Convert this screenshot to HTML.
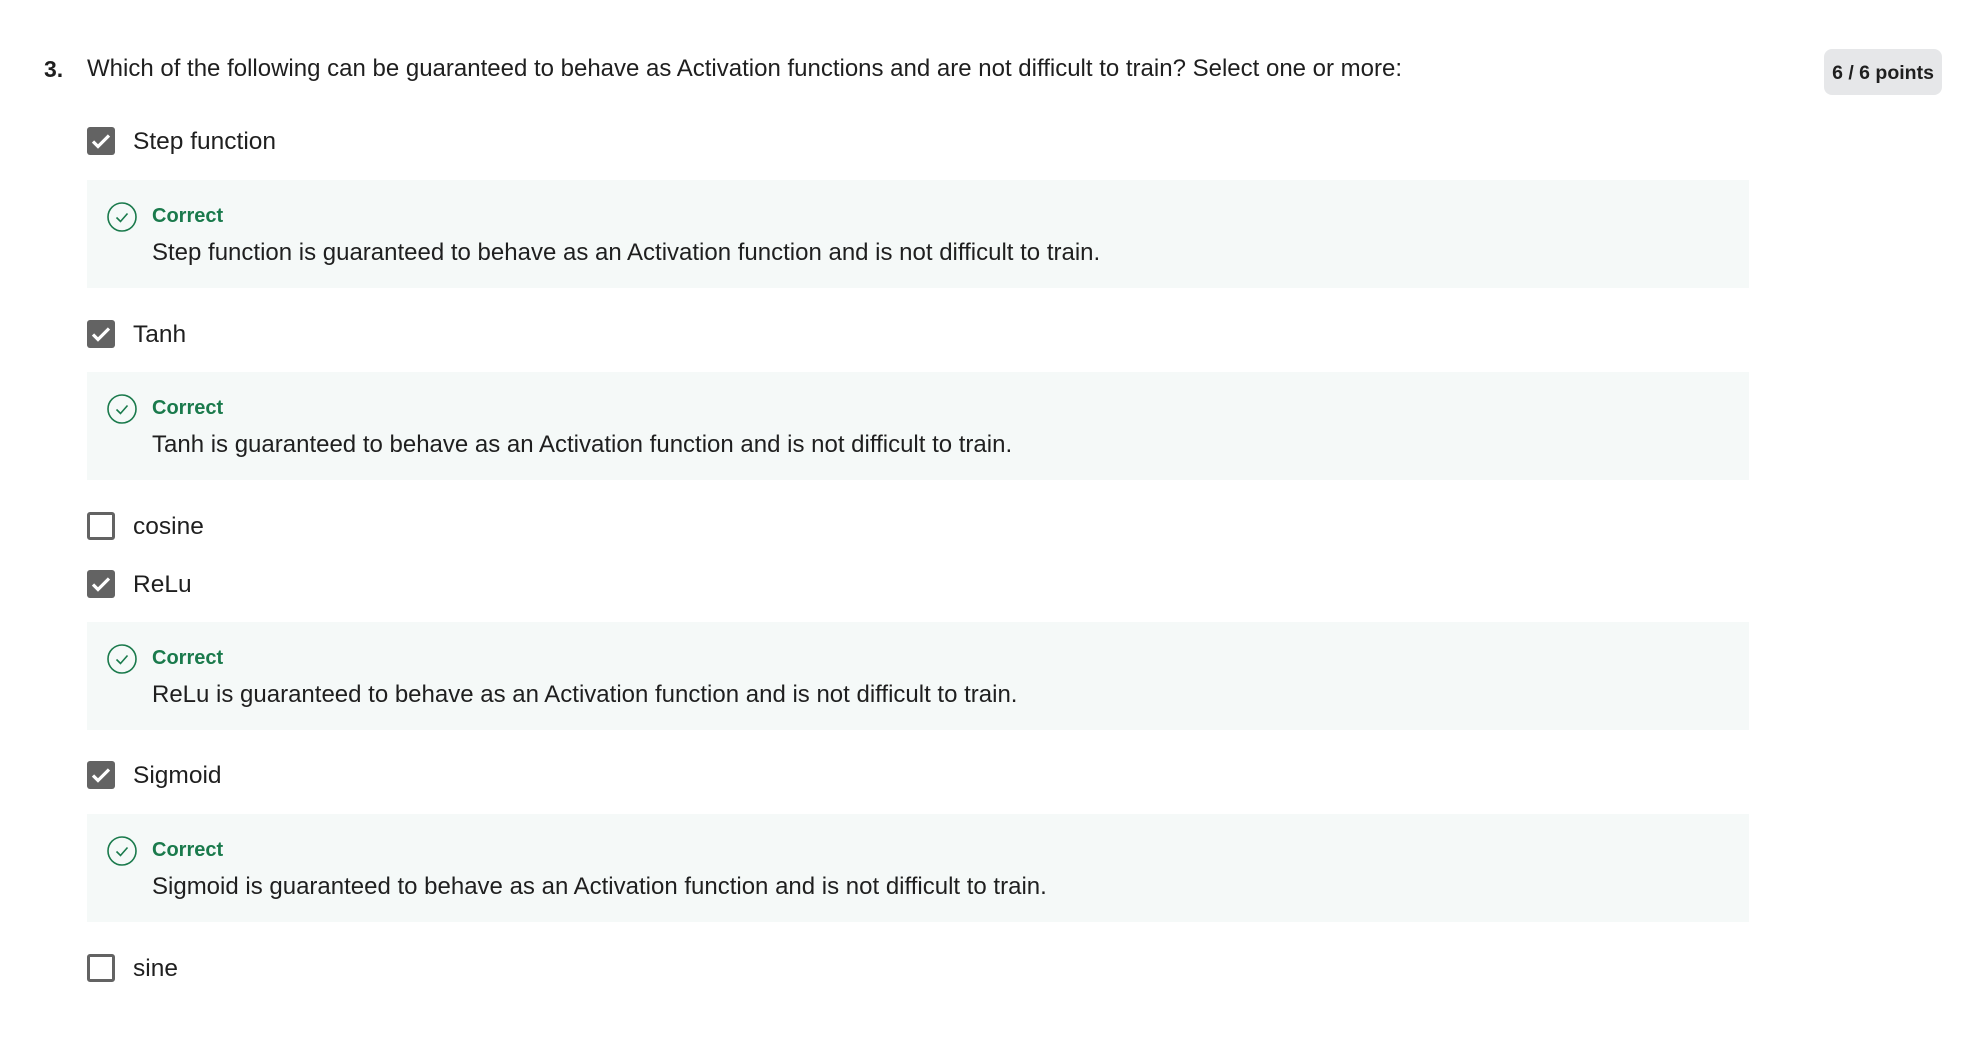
<!DOCTYPE html>
<html><head><meta charset="utf-8"><style>
body{margin:0;width:1961px;height:1046px;background:#fff;font-family:"Liberation Sans",sans-serif;color:#1f1f1f;position:relative;overflow:hidden}
.a{position:absolute;white-space:nowrap}
.q{font-size:24px;top:55px}
.cb{position:absolute;left:87px;width:28px;height:28px;border-radius:3px;box-sizing:border-box}
.on{background:#636363}
.off{border:3px solid #636363;background:#fff}
.lbl{position:absolute;left:133px;font-size:24.5px;line-height:30px;margin-top:0px}
.box{position:absolute;left:87px;width:1662px;height:108px;background:#f5f9f8}
.ic{position:absolute;left:20px;top:22px}
.c{position:absolute;left:65px;top:25px;font-size:20px;font-weight:bold;color:#1a7a4c}
.t{position:absolute;left:65px;top:59px;font-size:24px}
.badge{position:absolute;left:1824px;top:49px;width:118px;height:46px;border-radius:8px;background:#e6e7e9;font-weight:bold;font-size:19.5px;line-height:48px;text-align:center}
</style></head><body>
<div class="a q" style="left:44px;font-weight:bold;font-size:23px;top:56px">3.</div>
<div class="a q" style="left:87px">Which of the following can be guaranteed to behave as Activation functions and are not difficult to train? Select one or more:</div>
<div class="badge">6 / 6 points</div>

<div class="cb on" style="top:127px"><svg width="28" height="28"><path d="M6 14.5l5 5L22 8.5" stroke="#fff" stroke-width="3.2" fill="none"/></svg></div>
<div class="lbl" style="top:127px">Step function</div>
<div class="box" style="top:180px"><svg class="ic" width="32" height="32"><circle cx="15" cy="15" r="14" stroke="#1a7a4c" stroke-width="1.6" fill="none"/><path d="M9.5 15.5l4 4 7-8" stroke="#1a7a4c" stroke-width="1.6" fill="none"/></svg><div class="c">Correct</div><div class="t">Step function is guaranteed to behave as an Activation function and is not difficult to train.</div></div>

<div class="cb on" style="top:320px"><svg width="28" height="28"><path d="M6 14.5l5 5L22 8.5" stroke="#fff" stroke-width="3.2" fill="none"/></svg></div>
<div class="lbl" style="top:320px">Tanh</div>
<div class="box" style="top:372px"><svg class="ic" width="32" height="32"><circle cx="15" cy="15" r="14" stroke="#1a7a4c" stroke-width="1.6" fill="none"/><path d="M9.5 15.5l4 4 7-8" stroke="#1a7a4c" stroke-width="1.6" fill="none"/></svg><div class="c">Correct</div><div class="t">Tanh is guaranteed to behave as an Activation function and is not difficult to train.</div></div>

<div class="cb off" style="top:512px"></div>
<div class="lbl" style="top:512px">cosine</div>

<div class="cb on" style="top:570px"><svg width="28" height="28"><path d="M6 14.5l5 5L22 8.5" stroke="#fff" stroke-width="3.2" fill="none"/></svg></div>
<div class="lbl" style="top:570px">ReLu</div>
<div class="box" style="top:622px"><svg class="ic" width="32" height="32"><circle cx="15" cy="15" r="14" stroke="#1a7a4c" stroke-width="1.6" fill="none"/><path d="M9.5 15.5l4 4 7-8" stroke="#1a7a4c" stroke-width="1.6" fill="none"/></svg><div class="c">Correct</div><div class="t">ReLu is guaranteed to behave as an Activation function and is not difficult to train.</div></div>

<div class="cb on" style="top:761px"><svg width="28" height="28"><path d="M6 14.5l5 5L22 8.5" stroke="#fff" stroke-width="3.2" fill="none"/></svg></div>
<div class="lbl" style="top:761px">Sigmoid</div>
<div class="box" style="top:814px"><svg class="ic" width="32" height="32"><circle cx="15" cy="15" r="14" stroke="#1a7a4c" stroke-width="1.6" fill="none"/><path d="M9.5 15.5l4 4 7-8" stroke="#1a7a4c" stroke-width="1.6" fill="none"/></svg><div class="c">Correct</div><div class="t">Sigmoid is guaranteed to behave as an Activation function and is not difficult to train.</div></div>

<div class="cb off" style="top:954px"></div>
<div class="lbl" style="top:954px">sine</div>
</body></html>
